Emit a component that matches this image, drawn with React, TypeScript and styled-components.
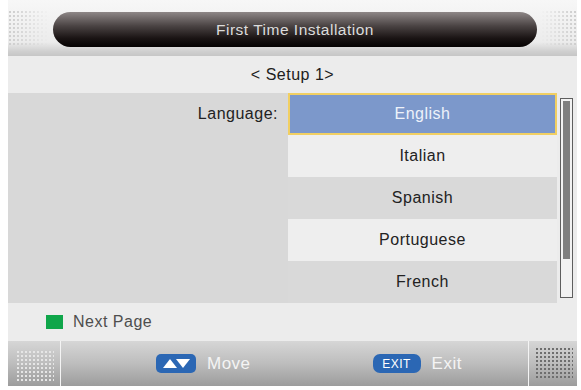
import React from 'react';
import styled, { createGlobalStyle } from 'styled-components';

const LANGUAGES = ['English', 'Italian', 'Spanish', 'Portuguese', 'French'];
const SELECTED = 0;

const GlobalStyle = createGlobalStyle`
  html, body {
    margin: 0;
    padding: 0;
    background: #ffffff;
  }
  body {
    font-family: 'Liberation Sans', Arial, sans-serif;
  }
`;

function MoveIcon() {
  return (
    <svg width="40" height="19" viewBox="0 0 40 19">
      <rect x="0" y="0" width="40" height="19" rx="5" fill="#2b67b4" />
      <polygon points="7,14 14,5 21,14" fill="#ffffff" />
      <polygon points="20,5 34,5 27,14" fill="#ffffff" />
    </svg>
  );
}

function App() {
  return (
    <>
      <GlobalStyle />
      <Screen>
        <Header>
          <Dots $side='left' />
          <TitlePill>First Time Installation</TitlePill>
          <Dots $side='right' />
        </Header>
        <SetupRow>&lt; Setup 1&gt;</SetupRow>
        <Main>
          <LabelPanel>
            <Label>Language:</Label>
          </LabelPanel>
          <List>
            {LANGUAGES.map((lang, idx) => (
              <Option key={lang} $selected={idx === SELECTED} $shaded={idx % 2 === 0}>
                {lang}
              </Option>
            ))}
          </List>
          <ScrollTrack>
            <ScrollThumb />
          </ScrollTrack>
        </Main>
        <HintRow>
          <GreenKey />
          <HintText>Next Page</HintText>
        </HintRow>
        <BottomBar>
          <CornerDots $side='left' />
          <Actions>
            <Action>
              <MoveIcon />
              <ActionText>Move</ActionText>
            </Action>
            <Action>
              <ExitBadge>EXIT</ExitBadge>
              <ActionText>Exit</ActionText>
            </Action>
          </Actions>
          <CornerDots $side='right' />
        </BottomBar>
      </Screen>
    </>
  );
}

const Screen = styled.div`
  width: 569px;
  height: 386px;
  margin-left: 8px;
  display: flex;
  flex-direction: column;
  background: #ececec;
  color: #222222;
  font-size: 16px;
  letter-spacing: 0.5px;
`;

const Header = styled.header`
  height: 56px;
  display: flex;
  align-items: flex-start;
  background: linear-gradient(#f7f7f7 0%, #ececec 75%, #cfcfcf 92%, #c6c6c6 100%);
`;

const Dots = styled.div<{ $side: 'left' | 'right' }>`
  width: ${(p) => (p.$side === 'left' ? '45px' : '40px')};
  height: 36px;
  margin-top: 10px;
  background-image: radial-gradient(circle, #cfcfcf 0.9px, transparent 1.2px);
  background-size: 4px 4px;
  -webkit-mask-image: linear-gradient(${(p) => (p.$side === 'left' ? 'to right' : 'to left')}, #000 10%, transparent 90%);
`;

const TitlePill = styled.div`
  flex: 1;
  height: 35px;
  margin-top: 12px;
  border-radius: 18px;
  background: linear-gradient(#8e8787 0%, #4a4343 40%, #1a1414 75%, #050202 100%);
  color: #dcdcdc;
  font-size: 15.5px;
  display: flex;
  align-items: center;
  justify-content: center;
`;

const SetupRow = styled.div`
  height: 37px;
  display: flex;
  align-items: center;
  justify-content: center;
  font-size: 16px;
  color: #202020;
`;

const Main = styled.div`
  height: 210px;
  display: flex;
`;

const LabelPanel = styled.div`
  width: 280px;
  background: #d8d8d8;
  display: flex;
  justify-content: flex-end;
  padding-right: 10px;
  box-sizing: border-box;
`;

const Label = styled.div`
  height: 42px;
  line-height: 42px;
  color: #222222;
`;

const List = styled.ul`
  width: 269px;
  margin: 0;
  padding: 0;
  list-style: none;
  display: flex;
  flex-direction: column;
`;

const Option = styled.li<{ $selected: boolean; $shaded: boolean }>`
  height: 42px;
  box-sizing: border-box;
  display: flex;
  align-items: center;
  justify-content: center;
  background: ${(p) => (p.$selected ? '#7c98cb' : p.$shaded ? '#d9d9d9' : '#eeeeee')};
  color: ${(p) => (p.$selected ? '#eef2fa' : '#222222')};
  border: ${(p) => (p.$selected ? '2px solid #f1cf62' : 'none')};
`;

const ScrollTrack = styled.div`
  width: 13px;
  height: 200px;
  margin: 5px 0 0 3px;
  box-sizing: border-box;
  border: 1px solid #5e5e5e;
  background: #f2f2f2;
  padding: 2px;
`;

const ScrollThumb = styled.div`
  height: 158px;
  background: #7f7f7f;
`;

const HintRow = styled.div`
  height: 38px;
  display: flex;
  align-items: center;
  padding-left: 38px;
  gap: 10px;
`;

const GreenKey = styled.span`
  width: 17px;
  height: 14px;
  background: #0fa64a;
`;

const HintText = styled.span`
  color: #4e4e4e;
`;

const BottomBar = styled.footer`
  flex: 1;
  display: flex;
  background: linear-gradient(#d6d6d6 0%, #bdbdbd 50%, #9c9c9c 100%);
`;

const CornerDots = styled.div<{ $side: 'left' | 'right' }>`
  width: ${(p) => (p.$side === 'left' ? '53px' : '49px')};
  box-sizing: border-box;
  border-${(p) => (p.$side === 'left' ? 'right' : 'left')}: 1px solid #f4f4f4;
  background-image: radial-gradient(
    circle,
    ${(p) => (p.$side === 'left' ? '#e6e6e6' : '#6e6e6e')} 0.9px,
    transparent 1.2px
  );
  background-size: 4px 4px;
  background-origin: content-box;
  background-clip: content-box;
  padding: ${(p) => (p.$side === 'left' ? '9px 6px 5px 8px' : '6px 4px 6px 6px')};
`;

const Actions = styled.div`
  flex: 1;
  display: flex;
  align-items: center;
  padding-left: 95px;
  gap: 122px;
`;

const Action = styled.div`
  display: flex;
  align-items: center;
  gap: 11px;
`;

const ActionText = styled.span`
  color: #f4f4f4;
  font-size: 17px;
`;

const ExitBadge = styled.span`
  width: 48px;
  height: 19px;
  border-radius: 7px;
  background: #2b67b4;
  color: #ffffff;
  font-size: 12px;
  display: flex;
  align-items: center;
  justify-content: center;
`;

export default App;
